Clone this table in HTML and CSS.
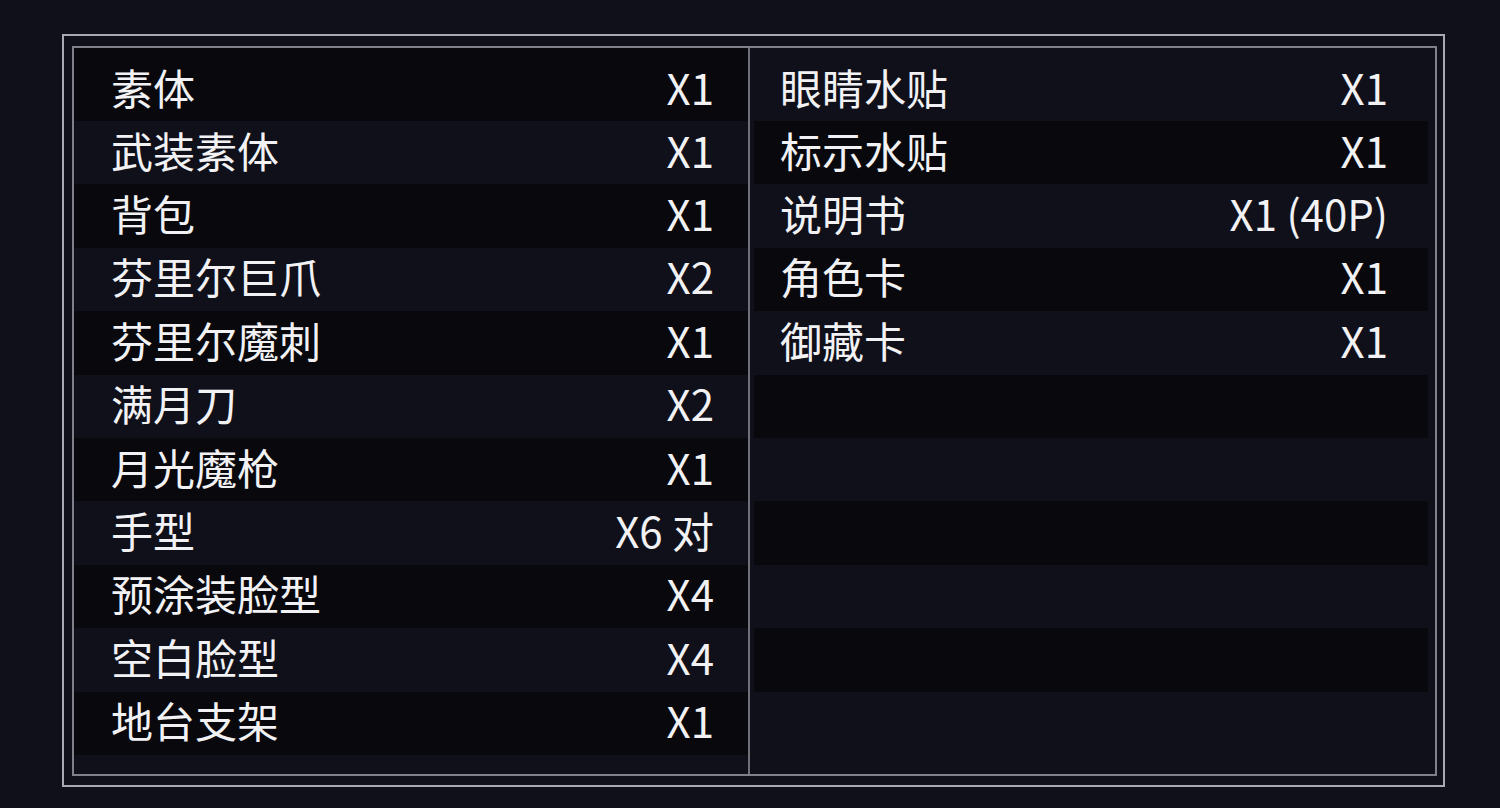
FILE: index.html
```html
<!DOCTYPE html>
<html lang="zh-CN">
<head>
<meta charset="utf-8">
<title>配件清单</title>
<link rel="stylesheet" href="styles.css">
</head>
<body>
<div class="frame">
  <div class="inner">
    <div class="col col-left">
      <div class="row dark"><span class="label">素体</span><span class="value">X1</span></div>
      <div class="row"><span class="label">武装素体</span><span class="value">X1</span></div>
      <div class="row dark"><span class="label">背包</span><span class="value">X1</span></div>
      <div class="row"><span class="label">芬里尔巨爪</span><span class="value">X2</span></div>
      <div class="row dark"><span class="label">芬里尔魔刺</span><span class="value">X1</span></div>
      <div class="row"><span class="label">满月刀</span><span class="value">X2</span></div>
      <div class="row dark"><span class="label">月光魔枪</span><span class="value">X1</span></div>
      <div class="row"><span class="label">手型</span><span class="value">X6 对</span></div>
      <div class="row dark"><span class="label">预涂装脸型</span><span class="value">X4</span></div>
      <div class="row"><span class="label">空白脸型</span><span class="value">X4</span></div>
      <div class="row dark"><span class="label">地台支架</span><span class="value">X1</span></div>
    </div>
    <div class="col col-right">
      <div class="row"><span class="label">眼睛水贴</span><span class="value">X1</span></div>
      <div class="row dark"><span class="label">标示水贴</span><span class="value">X1</span></div>
      <div class="row"><span class="label">说明书</span><span class="value">X1 (40P)</span></div>
      <div class="row dark"><span class="label">角色卡</span><span class="value">X1</span></div>
      <div class="row"><span class="label">御藏卡</span><span class="value">X1</span></div>
      <div class="row dark"></div>
      <div class="row"></div>
      <div class="row dark"></div>
      <div class="row"></div>
      <div class="row dark"></div>
      <div class="row"></div>
    </div>
  </div>
</div>
</body>
</html>
```

FILE: styles.css
```css
html, body {
  margin: 0;
  padding: 0;
}

body {
  width: 1500px;
  height: 808px;
  overflow: hidden;
  background: #10101a;
  font-family: "Noto Sans CJK SC", "Noto Sans", sans-serif;
  color: #f2f2f5;
  padding-top: 34px;
  box-sizing: border-box;
}

.frame {
  margin-left: 62px;
  width: 1383px;
  height: 753px;
  box-sizing: border-box;
  border: 2px solid #a9a9b1;
  padding: 10px 6px 9px 8px;
}

.inner {
  height: 100%;
  box-sizing: border-box;
  border: 2px solid #80808a;
  display: grid;
  grid-template-columns: 674px 1fr;
}

.col {
  display: flex;
  flex-direction: column;
}

.col-right {
  border-left: 2px solid #70707a;
  padding: 0 7px 0 4px;
}

.row {
  height: 63.4px;
  flex: none;
  display: flex;
  align-items: center;
  justify-content: space-between;
  font-size: 42px;
  line-height: 1;
  box-sizing: border-box;
  padding-bottom: 6px;
}

.row:first-child {
  height: 73px;
  padding-top: 10px;
}

.row.dark {
  background: #08080d;
}

.col-left .row {
  padding-left: 37px;
  padding-right: 34px;
}

.col-right .row {
  padding-left: 26px;
  padding-right: 40px;
}

.label, .value {
  white-space: nowrap;
}
```
